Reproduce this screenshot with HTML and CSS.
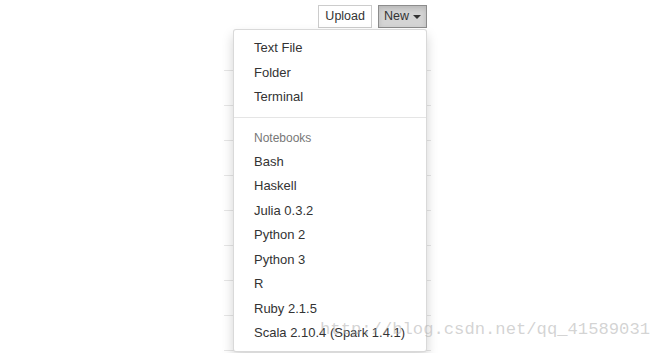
FILE: index.html
```html
<!DOCTYPE html>
<html>
<head>
<meta charset="utf-8">
<link rel="stylesheet" href="styles.css">
</head>
<body>
<div class="page">
  <div class="toolbar">
    <button class="btn btn-upload">Upload</button>
    <div class="dropdown">
      <button class="btn btn-active">New <span class="caret"></span></button>
      <ul class="menu">
        <li><a>Text File</a></li>
        <li><a>Folder</a></li>
        <li><a>Terminal</a></li>
        <li class="divider"></li>
        <li class="header">Notebooks</li>
        <li><a>Bash</a></li>
        <li><a>Haskell</a></li>
        <li><a>Julia 0.3.2</a></li>
        <li><a>Python 2</a></li>
        <li><a>Python 3</a></li>
        <li><a>R</a></li>
        <li><a>Ruby 2.1.5</a></li>
        <li><a>Scala 2.10.4 (Spark 1.4.1)</a></li>
      </ul>
    </div>
  </div>
  <div class="list">
    <div class="row"></div>
    <div class="row"></div>
    <div class="row"></div>
    <div class="row"></div>
    <div class="row"></div>
    <div class="row"></div>
    <div class="row"></div>
    <div class="row"></div>
    <div class="row"></div>
  </div>
</div>
<div class="watermark">http://blog.csdn.net/qq_41589031</div>
</body>
</html>
```
FILE: styles.css
```css
html, body {
  margin: 0;
  padding: 0;
  background: #fff;
  width: 661px;
  height: 353px;
  overflow: hidden;
  font-family: "Liberation Sans", Arial, sans-serif;
  color: #333;
}
.page {
  position: relative;
}
.toolbar {
  display: flex;
  justify-content: flex-end;
  align-items: flex-start;
  gap: 6px;
  width: 427px;
  padding-top: 5px;
  box-sizing: border-box;
}
.btn {
  font-family: "Liberation Sans", Arial, sans-serif;
  font-size: 12.5px;
  line-height: 19px;
  padding: 1px 5px;
  border: 1px solid #ccc;
  background: #fff;
  color: #333;
  border-radius: 0;
  margin: 0;
  display: flex;
  align-items: center;
}
.btn-upload {
  padding: 1px 6px;
}
.btn-active {
  background: #d4d4d4;
  border-color: #8c8c8c;
  box-shadow: inset 0 3px 5px rgba(0,0,0,.125);
}
.caret {
  display: inline-block;
  width: 0;
  height: 0;
  margin-left: 4px;
  border-top: 4px solid #333;
  border-left: 4px solid transparent;
  border-right: 4px solid transparent;
}
.dropdown {
  position: relative;
}
.menu {
  position: absolute;
  z-index: 10;
  top: 24px;
  right: 0;
  width: 194px;
  box-sizing: border-box;
  margin: 0;
  padding: 6px 0 5px;
  list-style: none;
  background: #fff;
  border: 1px solid rgba(0,0,0,.15);
  border-radius: 3px;
  box-shadow: 0 6px 12px rgba(0,0,0,.175);
  font-size: 13px;
}
.menu li a {
  display: block;
  padding: 3px 20px;
  line-height: 18.5px;
  color: #333;
  white-space: nowrap;
}
.menu .divider {
  height: 1px;
  background: #e5e5e5;
  margin: 7px 0 9px;
}
.menu .header {
  padding: 3px 20px;
  font-size: 12px;
  line-height: 17px;
  color: #777;
}
.list {
  margin-left: 224px;
  width: 207px;
  margin-top: 8px;
}
.row {
  height: 34px;
  border-bottom: 1px solid #e6e6e6;
  box-sizing: content-box;
}
.watermark {
  position: absolute;
  z-index: 20;
  left: 320px;
  top: 320px;
  font-family: "Liberation Mono", "DejaVu Sans Mono", monospace;
  font-size: 17.2px;
  color: rgba(175,175,175,.55);
  pointer-events: none;
  white-space: nowrap;
}
```
